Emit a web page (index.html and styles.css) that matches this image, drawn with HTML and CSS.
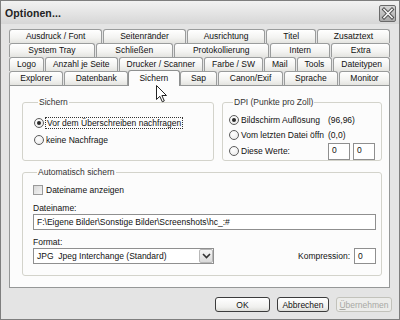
FILE: index.html
```html
<!DOCTYPE html>
<html lang="de">
<head>
<meta charset="utf-8">
<title>Optionen</title>
<link rel="stylesheet" href="styles.css">
</head>
<body>
<div class="window">
  <div class="titlebar">
    <span class="title">Optionen...</span>
    <button class="close" aria-label="Schließen">
      <svg width="14" height="13" viewBox="0 0 14 13">
        <path d="M3 2.5 L11 10.5 M11 2.5 L3 10.5" stroke="#4a4a4a" stroke-width="3.4" stroke-linecap="square"/>
        <path d="M3 2.5 L11 10.5 M11 2.5 L3 10.5" stroke="#f4f4f4" stroke-width="1.6" stroke-linecap="square"/>
      </svg>
    </button>
  </div>
  <div class="body">
    <div class="tabs">
      <div class="tabrow">
        <div class="tab">Ausdruck / Font</div>
        <div class="tab">Seitenränder</div>
        <div class="tab">Ausrichtung</div>
        <div class="tab">Titel</div>
        <div class="tab">Zusatztext</div>
      </div>
      <div class="tabrow">
        <div class="tab">System Tray</div>
        <div class="tab">Schließen</div>
        <div class="tab">Protokollierung</div>
        <div class="tab">Intern</div>
        <div class="tab">Extra</div>
      </div>
      <div class="tabrow">
        <div class="tab">Logo</div>
        <div class="tab">Anzahl je Seite</div>
        <div class="tab">Drucker / Scanner</div>
        <div class="tab">Farbe / SW</div>
        <div class="tab">Mail</div>
        <div class="tab">Tools</div>
        <div class="tab">Dateitypen</div>
      </div>
      <div class="tabrow">
        <div class="tab">Explorer</div>
        <div class="tab">Datenbank</div>
        <div class="tab selected">Sichern</div>
        <div class="tab">Sap</div>
        <div class="tab">Canon/Exif</div>
        <div class="tab">Sprache</div>
        <div class="tab">Monitor</div>
      </div>
    </div>
    <div class="panel">
      <div class="toprow">
        <fieldset class="group g-sichern">
          <legend>Sichern</legend>
          <label class="opt"><span class="radio on"></span><span class="focus">Vor dem Überschreiben nachfragen</span></label>
          <label class="opt"><span class="radio"></span>keine Nachfrage</label>
        </fieldset>
        <fieldset class="group g-dpi">
          <legend>DPI (Punkte pro Zoll)</legend>
          <div class="dpirow"><label class="opt"><span class="radio on"></span>Bildschirm Auflösung</label><span class="val">(96,96)</span></div>
          <div class="dpirow"><label class="opt"><span class="radio"></span>Vom letzten Datei öffn</label><span class="val">(0,0)</span></div>
          <div class="dpirow"><label class="opt"><span class="radio"></span>Diese Werte:</label><span class="val"><span class="input small">0</span><span class="input small">0</span></span></div>
        </fieldset>
      </div>
      <fieldset class="group g-auto">
        <legend>Automatisch sichern</legend>
        <label class="opt chk"><span class="checkbox"></span>Dateiname anzeigen</label>
        <div class="lbl">Dateiname:</div>
        <div class="input wide">F:\Eigene Bilder\Sonstige Bilder\Screenshots\hc_:#</div>
        <div class="lbl">Format:</div>
        <div class="formatrow">
          <div class="select">
            <span class="selval">JPG&nbsp; Jpeg Interchange (Standard)</span>
            <span class="arrow">
              <svg width="9" height="6" viewBox="0 0 9 6"><path d="M1 1 L4.5 4.5 L8 1" fill="none" stroke="#333" stroke-width="1.6"/></svg>
            </span>
          </div>
          <span class="komp">Kompression:</span>
          <span class="input komp-in">0</span>
        </div>
      </fieldset>
    </div>
    <div class="buttons">
      <button class="btn">OK</button>
      <button class="btn">Abbrechen</button>
      <button class="btn disabled"><u>Ü</u>bernehmen</button>
    </div>
  </div>
  <svg class="cursor" width="12" height="18" viewBox="0 0 12 18">
    <path d="M0.5 0.5 L0.5 14.5 L3.8 11.3 L6.3 16.8 L8.3 15.9 L5.9 10.5 L10.5 10.5 Z" fill="#fff" stroke="#222" stroke-width="1"/>
  </svg>
</div>
</body>
</html>
```

FILE: styles.css
```css
* { box-sizing: border-box; }
body { margin: 0; background: #fff; font-family: "Liberation Sans", Arial, sans-serif; font-size: 8.5px; color: #111; }

.window {
  position: relative;
  width: 400px; height: 320px;
  background: #e4e4e4;
  border: 1px solid #7e7e7e;
  display: flex; flex-direction: column;
  overflow: hidden;
}

.titlebar {
  height: 23px;
  flex: none;
  background: linear-gradient(#f2f2f2, #e2e2e2 60%, #d6d6d6);
  display: flex; align-items: center; justify-content: space-between;
  padding: 0 3px 0 4px;
}
.title { font-weight: bold; font-size: 10.5px; color: #222; letter-spacing: 0.1px; }
.close {
  width: 17px; height: 17px; padding: 0; margin-top: 1px;
  border: 1px solid #6a6a6a; border-radius: 2px;
  background: linear-gradient(#d6d6d6, #a9a9a9);
  display: flex; align-items: center; justify-content: center;
}

.body { flex: 1; padding: 5px 9px 0 8px; display: flex; flex-direction: column; }

.tabs { display: flex; flex-direction: column; }
.tabrow { display: flex; gap: 1px; height: 14px; }
.tab {
  flex: 1 1 auto;
  height: 14px;
  line-height: 12px;
  text-align: center;
  padding: 0 6px;
  border: 1px solid #9a9c9c;
  border-bottom: none;
  border-radius: 3px 3px 0 0;
  background: linear-gradient(#ffffff, #f3f3f1 60%, #e4e4e0);
  white-space: nowrap;
}
.tab.selected {
  position: relative; z-index: 2;
  height: 16px;
  margin: -1px -1px -1px -1px;
  background: #fcfcfc;
  line-height: 14px;
  border-color: #8e9090;
}

.panel {
  height: 203px;
  flex: none;
  background: #fcfcfc;
  border: 1px solid #959797;
  padding: 11px 7px 0 12px;
}

.group {
  margin: 0;
  border: 1px solid #d3d3cb;
  border-radius: 3px;
  min-width: 0;
  padding: 0;
}
.group legend { padding: 0 1px; margin-left: 4px; color: #333; line-height: 10px; }

.toprow { display: flex; gap: 8px; }
.g-sichern { width: 192px; height: 64px; padding: 10px 6px 0 11px; display: flex; flex-direction: column; gap: 5px; }
.g-dpi { flex: 1; height: 64px; padding: 6px 4px 0 6px; }

.opt { display: flex; align-items: center; gap: 2px; height: 12px; white-space: nowrap; }
.radio {
  width: 10px; height: 10px; border-radius: 50%;
  border: 1px solid #5c5c5c;
  background: radial-gradient(circle at 40% 35%, #ffffff, #e6e6e6);
  position: relative; flex: none;
}
.radio.on::after {
  content: ""; position: absolute; left: 2px; top: 2px;
  width: 4px; height: 4px; border-radius: 50%; background: #2a2a2a;
}
.focus { outline: 1px dotted #333; outline-offset: 0; padding: 0 1px; }

.dpirow { display: flex; align-items: center; height: 14px; }
.dpirow:nth-child(3) { margin-top: 1px; }
.dpirow:nth-child(4) { height: 18px; }
.dpirow .opt { width: 99px; }
.val { display: flex; gap: 3px; }

.input {
  background: #fff;
  border: 1px solid #8f8f8f;
  padding: 0 3px;
  line-height: 13px;
  height: 15px;
  white-space: nowrap;
}
.input.small { width: 22px; height: 17px; line-height: 13px; }

.g-auto { margin-top: 6px; height: 109px; padding: 7px 5px 0 10px; }
.chk { height: 12px; }
.checkbox {
  width: 10px; height: 10px; flex: none;
  border: 1px solid #9a9a9a;
  background: linear-gradient(135deg, #d8d8d8, #f4f4f4);
  margin-right: 1px;
}
.lbl { margin-top: 7px; height: 10px; line-height: 10px; }
.input.wide { margin-top: 1px; height: 16px; line-height: 14px; }
.g-auto .lbl:nth-of-type(2) { margin-top: 10px; }

.formatrow { display: flex; align-items: center; margin-top: 1px; }
.select {
  width: 181px; height: 16px;
  border: 1px solid #8f8f8f;
  background: #fff;
  display: flex; align-items: center; justify-content: space-between;
  padding-left: 3px;
}
.arrow {
  width: 14px; height: 14px;
  border: 1px solid #b8b8b8; border-radius: 2px;
  background: linear-gradient(#f6f6f6, #dadada);
  display: flex; align-items: center; justify-content: center;
}
.komp { margin-left: auto; margin-right: 4px; }
.input.komp-in { width: 22px; height: 16px; line-height: 14px; }

.buttons { display: flex; justify-content: flex-end; gap: 7px; margin-top: 9px; margin-right: -2px; }
.btn {
  height: 15px; padding: 0;
  font-family: inherit; font-size: 8.5px; color: #111;
  border: 1px solid #3c3c3c; border-radius: 3px;
  background: linear-gradient(#ffffff, #f0f0ee 70%, #dcdcd8);
  line-height: 12px;
}
.btn:nth-child(1) { width: 55px; }
.btn:nth-child(2) { width: 52px; }
.btn:nth-child(3) { width: 56px; }
.btn u { text-decoration: underline; }
.btn.disabled { border-color: #c2c2bb; color: #a8a8a4; background: #ececea; }

.cursor { position: absolute; left: 155px; top: 84px; z-index: 5; }
```
